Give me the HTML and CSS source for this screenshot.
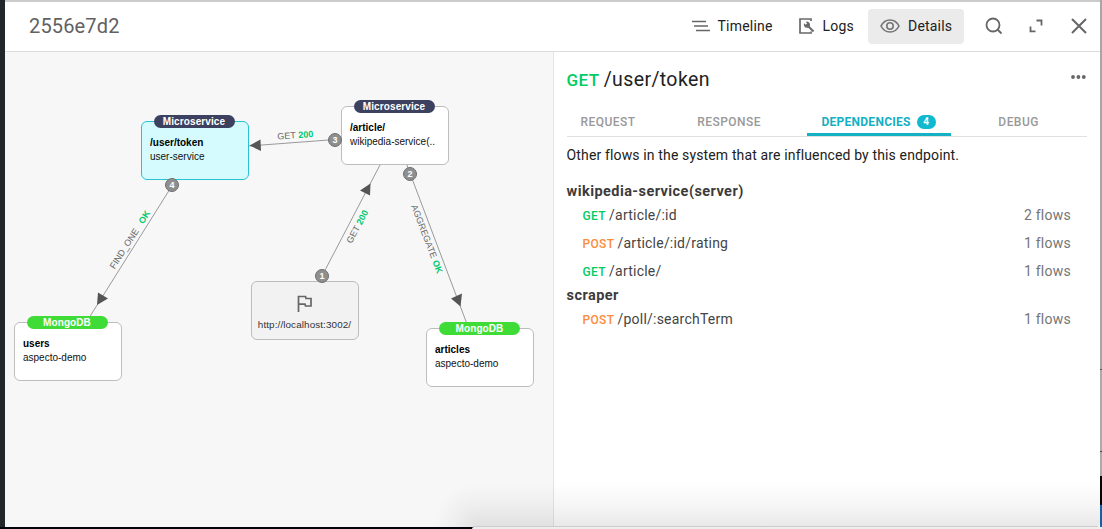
FILE: index.html
```html
<!DOCTYPE html>
<html lang="en">
<head>
<meta charset="utf-8">
<title>2556e7d2</title>
<link rel="stylesheet" href="styles.css">
</head>
<body>
<div class="desktop">
  <div class="edge-left"></div>
  <main class="window">
    <header class="header">
      <h1 class="trace-id">2556e7d2</h1>
      <nav class="actions">
        <button class="action timeline">
          <svg width="18" height="12" viewBox="0 0 18 12" fill="none" stroke="#666" stroke-width="1.7"><path d="M0 1.5H14M2 6H16M4 10.500H18"/></svg>
          <span>Timeline</span>
        </button>
        <button class="action logs">
          <svg width="16" height="16" viewBox="0 0 16 16" fill="none" stroke="#6a6a6a" stroke-width="1.700"><path d="M12 3V1H1V15H12V13.500"/><path d="M9 8L14.500 13.500" stroke-width="2"/><path d="M5.200 5.300L6.700 6.800L8.200 5.300L6.700 3.900A3.100 3.100 0 1 1 5.200 5.300Z" fill="#6a6a6a" stroke="none"/></svg>
          <span>Logs</span>
        </button>
        <button class="action details">
          <svg width="20" height="14" viewBox="0 0 20 14" fill="none" stroke="#757575" stroke-width="1.600"><path d="M1 7C3 3 6.300 1 10 1S17 3 19 7C17 11 13.700 13 10 13S3 11 1 7Z"/><circle cx="10" cy="7" r="3.200"/></svg>
          <span>Details</span>
        </button>
        <button class="tool search" aria-label="Search"><svg width="18" height="18" viewBox="0 0 18 18" fill="none" stroke="#666" stroke-width="1.800"><circle cx="8" cy="8" r="6.500"/><path d="M12.500 12.500L16.500 16.500"/></svg></button>
        <button class="tool expand" aria-label="Expand"><svg width="14" height="14" viewBox="0 0 14 14" fill="none" stroke="#666" stroke-width="1.800"><path d="M7.500 1.500H12.500V6.500M1.500 7.500V12.300H6.500"/></svg></button>
        <button class="tool close" aria-label="Close"><svg width="16" height="16" viewBox="0 0 16 16" fill="none" stroke="#666" stroke-width="2"><path d="M1 1L15 15M15 1L1 15"/></svg></button>
      </nav>
    </header>
    <div class="content">
      <section class="graph">
        <svg class="edges" width="548" height="474" viewBox="5 52 548 474">
          <g stroke="#999" stroke-width="1">
            <path d="M335 139.500L249 146M380.500 164L322 276M406.500 164L467 324M172.500 185L89 318"/>
          </g>
          <g fill="#555">
            <path d="M249.500 145.500L260.500 139.500L261 151Z"/>
            <path d="M370.500 183.500L370 195.500L360 190.500Z"/>
            <path d="M460.500 306.500L451 298.500L462 293.500Z"/>
            <path d="M97 305L98 292.500L108 298.500Z"/>
          </g>
          <g class="edge-label">
            <text transform="translate(277.500 139.500) rotate(-4)">GET <tspan class="ok">200</tspan></text>
            <text transform="translate(351.500 244) rotate(-62)">GET <tspan class="ok">200</tspan></text>
            <text transform="translate(411 206) rotate(69)">AGGREGATE <tspan class="ok">OK</tspan></text>
            <text transform="translate(114.500 269.500) rotate(-57.500)">FIND_ONE <tspan class="ok" dx="5">OK</tspan></text>
          </g>
        </svg>
        <article class="node n-user active"><span class="kind">Microservice</span><b>/user/token</b><span>user-service</span></article>
        <article class="node n-article"><span class="kind">Microservice</span><b>/article/</b><span>wikipedia-service(..</span></article>
        <article class="node n-users"><span class="kind mongo">MongoDB</span><b>users</b><span>aspecto-demo</span></article>
        <article class="node n-articles"><span class="kind mongo">MongoDB</span><b>articles</b><span>aspecto-demo</span></article>
        <article class="node n-root">
          <svg width="16" height="17" viewBox="0 0 16 17" fill="none" stroke="#666" stroke-width="1.700"><path d="M1.500 17V1.500H8.500L9 3.500H14V11H8.500L8 9.200H1.500"/></svg>
          <span>http://localhost:3002/</span>
        </article>
        <span class="step s1">1</span>
        <span class="step s2">2</span>
        <span class="step s3">3</span>
        <span class="step s4">4</span>
      </section>
      <aside class="panel">
        <div class="endpoint">
          <h2><span class="get">GET</span> <span class="path">/user/token</span></h2>
          <svg class="more" width="15" height="4" viewBox="0 0 15 4" fill="#666"><circle cx="2" cy="2" r="1.900"/><circle cx="7.400" cy="2" r="1.900"/><circle cx="12.800" cy="2" r="1.900"/></svg>
        </div>
        <div class="tabs">
          <span class="tab request">REQUEST</span>
          <span class="tab response">RESPONSE</span>
          <span class="tab deps">DEPENDENCIES <span class="count">4</span></span>
          <span class="tab debug">DEBUG</span>
        </div>
        <p class="intro">Other flows in the system that are influenced by this endpoint.</p>
        <h3>wikipedia-service(server)</h3>
        <ul>
          <li><span class="m get">GET</span><span class="route">/article/:id</span><span class="flows">2 flows</span></li>
          <li><span class="m post">POST</span><span class="route">/article/:id/rating</span><span class="flows">1 flows</span></li>
          <li><span class="m get">GET</span><span class="route">/article/</span><span class="flows">1 flows</span></li>
        </ul>
        <h3>scraper</h3>
        <ul>
          <li><span class="m post">POST</span><span class="route">/poll/:searchTerm</span><span class="flows">1 flows</span></li>
        </ul>
      </aside>
    </div>
    <div class="dock-shadow"></div>
  </main>
  <div class="edge-right"></div>
  <footer class="edge-bottom"><div class="dock"></div></footer>
</div>
</body>
</html>
```
FILE: styles.css
```css
* { box-sizing: border-box; }
body { margin: 0; overflow: hidden; font-family: Roboto, "Liberation Sans", sans-serif; color: #212121; }
h1, h2, h3, p, ul { margin: 0; padding: 0; font-weight: 400; }
ul { list-style: none; }
button { border: 0; background: none; padding: 0; font: inherit; letter-spacing: inherit; color: inherit; display: flex; align-items: center; }
svg { display: block; flex: none; }

.desktop { width: 1102px; height: 529px; display: grid; grid-template-columns: 5px 1095px 2px; grid-template-rows: 527px 2px; }
.edge-left { background: #22272b; }
.edge-right { background: linear-gradient(#a6a6a6 0 369px, #555 369px 370px, #aaa 370px 451px, #444 451px 452px, #aaa 452px 476px, #050505 476px 505px, #1262a4 505px); }
.edge-bottom { grid-column: 1 / -1; background: #02040c; padding-left: 472px; }
.dock { height: 2px; background: #eee; border-top-left-radius: 2px; }

.window { position: relative; background: #fff; border-top: 2px solid #cbcbcb; border-bottom-right-radius: 4px; overflow: hidden; display: flex; flex-direction: column; }
.header { flex: none; height: 50px; border-bottom: 1px solid #dcdcdc; padding: 0 13px 1px 24px; display: flex; align-items: center; justify-content: space-between; }
.trace-id { font-size: 20px; letter-spacing: .15px; color: #616161; }
.actions { display: flex; align-items: center; font-size: 14px; letter-spacing: .2px; }
.timeline { gap: 8px; margin-right: 26px; }
.logs { gap: 8px; margin-right: 14px; }
.details { gap: 8px; width: 96px; height: 35px; padding-left: 12px; border-radius: 4px; background: #ebebeb; margin-right: 21px; }
.search { margin-right: 26px; }
.expand { margin-right: 28px; }

.content { flex: 1; display: flex; }
.graph { position: relative; flex: none; width: 549px; background: #f7f7f7; border-right: 1px solid #e4e4e4; font-family: "Liberation Sans", Arial, sans-serif; }
.edges { position: absolute; left: 0; top: 0; }
.edge-label { font-size: 9px; letter-spacing: .05px; fill: #666; }
.ok { fill: #00c96b; font-weight: 700; }
.node { position: absolute; width: 108px; height: 59px; border: 1px solid #bdbdbd; border-radius: 6px; background: #fff; padding: 14px 0 0 8px; display: flex; flex-direction: column; font-size: 10px; line-height: 14px; color: #111; white-space: nowrap; }
.node b { color: #000; }
.kind { position: absolute; left: 12px; top: -7px; width: 81px; height: 12.500px; border-radius: 7px; background: #3d4160; color: #fff; font-weight: 700; font-size: 10px; line-height: 13px; text-align: center; letter-spacing: .1px; }
.mongo { background: #3fdc37; }
.active { background: #d5fbff; border-color: #28c3d2; }
.n-user { left: 136px; top: 69px; }
.n-user .kind { left: 11.500px; }
.n-article { left: 336px; top: 54px; }
.n-users { left: 9px; top: 270px; }
.n-users .kind, .n-article .kind { left: 11.500px; }
.n-articles { left: 421px; top: 276px; }
.n-root { left: 245.500px; top: 229px; background: #f2f2f2; align-items: center; padding: 13px 0 0; gap: 6px; font-size: 9.900px; color: #333; }
.n-root span { letter-spacing: .1px; }
.step { position: absolute; width: 14px; height: 14px; border: 1px solid #6f6f6f; border-radius: 50%; background: #8f8f8f; color: #fff; font-size: 9px; font-weight: 700; line-height: 12px; text-align: center; }
.s1 { left: 310px; top: 217px; }
.s2 { left: 398px; top: 115px; }
.s3 { left: 323px; top: 81px; }
.s4 { left: 160px; top: 126px; }

.panel { flex: 1; min-width: 0; padding: 0 14px 0 12.600px; }
.endpoint { height: 55px; display: flex; justify-content: space-between; }
.endpoint h2 { padding-top: 16px; font-size: 19.500px; line-height: 24px; letter-spacing: .38px; }
.endpoint .get { font-size: 17px; font-weight: 500; }
.path { margin-left: -1px; }
.more { margin-top: 23px; }
.get { color: #0c6; }
.post { color: #fb8c3c; }
.tabs { height: 30px; width: 520px; border-bottom: 1px solid #e0e0e0; display: grid; grid-template-columns: 83px 157px 144px 136px; font-size: 12px; font-weight: 500; letter-spacing: .45px; color: #999; }
.tab { height: 29px; display: flex; align-items: center; justify-content: center; }
.response { padding-left: 2px; }
.deps { color: #14b0c4; border-bottom: 3px solid #14b0c4; gap: 6px; padding-top: 3px; font-weight: 700; letter-spacing: .28px; }
.count { width: 19px; height: 14px; border-radius: 7px; background: #10b9cf; color: #fff; font-size: 10px; line-height: 14px; text-align: center; }
.intro { padding-top: 8px; font-size: 14px; line-height: 20px; letter-spacing: .14px; white-space: nowrap; }
h3 { height: 20px; padding-top: 1px; font-size: 14.500px; line-height: 20px; font-weight: 700; letter-spacing: .44px; color: #3b3b3b; }
.intro + h3 { margin-top: 16px; }
li { height: 28px; display: flex; align-items: center; padding: 0 15px 0 16px; font-size: 14px; letter-spacing: .22px; color: #444; }
.m { font-size: 12px; font-weight: 500; letter-spacing: .3px; margin-right: 3.200px; padding-top: 1px; }
.flows { margin-left: auto; color: #757575; letter-spacing: .25px; }
.dock-shadow { position: absolute; left: 428px; right: 0; bottom: 0; height: 45px; background: linear-gradient(#ccc, #ccc) 40px 100% / 100% 1px no-repeat, radial-gradient(ellipse 45px 45px at 45px 100%, rgba(0,0,0,.09), rgba(0,0,0,.035) 50%, transparent) 0 0 / 45px 100% no-repeat, linear-gradient(transparent, rgba(0,0,0,.035) 50%, rgba(0,0,0,.09)) 45px 0 no-repeat; pointer-events: none; }
```
